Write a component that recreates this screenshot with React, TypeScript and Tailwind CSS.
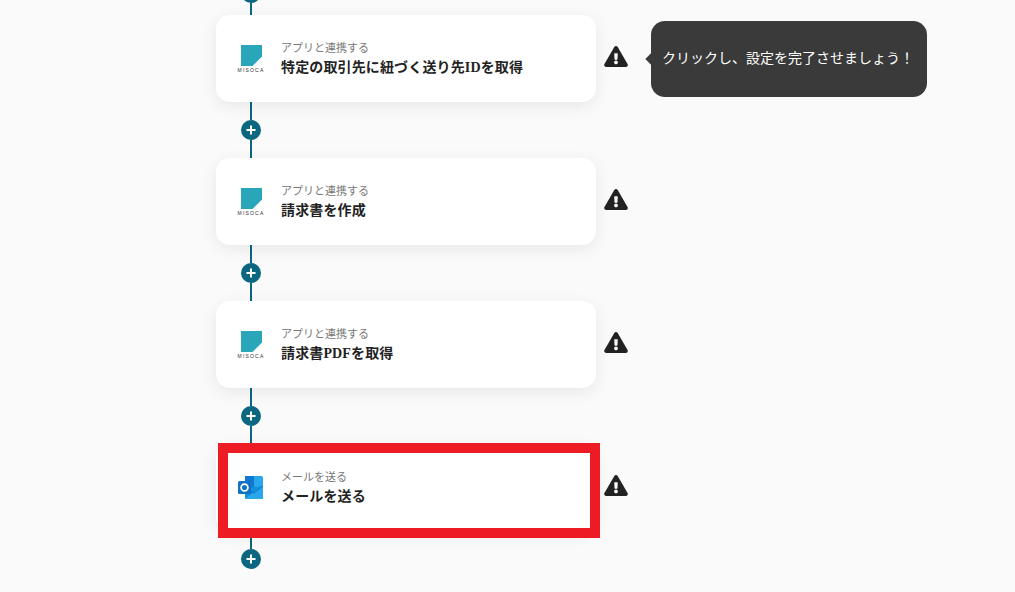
import { FaExclamationTriangle } from "react-icons/fa"

const jp = "font-['Noto_Sans_CJK_JP','Noto_Sans',sans-serif]"

function MisocaLogo() {
  return (
    <div className="mt-[2px] flex w-[24px] flex-col items-center">
      <svg width="21" height="21" viewBox="0 0 21 21" className="block">
        <path d="M0 0H21V11.5L11.5 21H0Z" fill="#2aa6ba" />
      </svg>
      <span className="mt-[1px] text-[5px] leading-[7px] tracking-[1.2px] text-[#333] font-['Liberation_Sans',sans-serif]">
        MISOCA
      </span>
    </div>
  )
}

function OutlookLogo() {
  return (
    <svg width="26" height="25" viewBox="0 0 26 25" className="block">
      <rect x="7" y="1" width="9" height="6" fill="#0f78d4" />
      <path d="M16 1H23.5Q25 1 25 2.5V7H16Z" fill="#28a8ea" />
      <rect x="7" y="7" width="9" height="6" fill="#0f78d4" />
      <rect x="16" y="7" width="9" height="6" fill="#28a8ea" />
      <rect x="7" y="13" width="9" height="6" fill="#0a64b8" />
      <path d="M7 13L25 11V22.5Q25 24 23.5 24H8.5Q7 24 7 22.5Z" fill="#1490df" />
      <path d="M7 24L25 11V22.5Q25 24 23.5 24Z" fill="#28a8ea" />
      <path d="M7 13L16 18L25 11" fill="none" stroke="#0c6cc4" strokeWidth="0.8" />
      <rect x="0" y="6" width="13" height="13" rx="1.5" fill="#1272c4" />
      <circle cx="6.5" cy="12.5" r="3.4" fill="none" stroke="#fff" strokeWidth="1.7" />
    </svg>
  )
}

function PlusDot() {
  return (
    <div className="flex h-5 w-5 items-center justify-center rounded-full bg-[#0b6680]">
      <svg width="10" height="10" viewBox="0 0 10 10">
        <path d="M5 1.2V8.8M1.2 5H8.8" stroke="#fff" strokeWidth="2" strokeLinecap="round" />
      </svg>
    </div>
  )
}

function Connector({ last }: { last?: boolean }) {
  return (
    <div className="ml-[25px] flex w-5 flex-col items-center">
      <div className="h-[18px] w-[2px] bg-[#0b6680]" />
      <PlusDot />
      {!last && <div className="h-[18px] w-[2px] bg-[#0b6680]" />}
    </div>
  )
}

function StepRow({
  logo,
  label,
  title,
  children,
}: {
  logo: React.ReactNode
  label: string
  title: string
  children?: React.ReactNode
}) {
  return (
    <div className="relative flex items-center">
      <div className="flex h-[87px] w-[380px] items-center rounded-[14px] bg-white shadow-[0_4px_16px_rgba(0,0,0,0.08)]">
        <div className="flex w-[65px] justify-center pl-[5px]">{logo}</div>
        <div className="flex flex-col">
          <span className="text-[11px] leading-[16px] text-[#777]">{label}</span>
          <span className="mt-[3px] font-['Liberation_Serif','Noto_Sans_CJK_JP',serif] text-sm font-bold leading-[20px] tracking-[0.14px] text-[#222]">
            {title}
          </span>
        </div>
      </div>
      <FaExclamationTriangle className="ml-2 -mt-[5px] h-[21px] w-6 text-[#222]" />
      {children}
    </div>
  )
}

export default function App() {
  return (
    <div className={`h-[592px] overflow-hidden bg-[#fafafa] pl-[216px] ${jp}`}>
      <div className="w-fit -mt-[17px]">
        {/* top of the flow is cut off by the viewport */}
        <div className="ml-[25px] flex w-5 flex-col items-center">
          <PlusDot />
          <div className="h-[12px] w-[2px] bg-[#0b6680]" />
        </div>
        <StepRow logo={<MisocaLogo />} label="アプリと連携する" title="特定の取引先に紐づく送り先IDを取得">
          <div className="absolute left-[435px] top-[6px] flex h-[76px] w-[276px] items-center rounded-[14px] bg-[#3a3a3a] pb-[4px] pl-[11px] text-sm text-white">
            <div className="absolute -left-[4px] top-[34px] h-2 w-2 rotate-45 bg-[#3a3a3a]" />
            クリックし、設定を完了させましょう！
          </div>
        </StepRow>
        <Connector />
        <StepRow logo={<MisocaLogo />} label="アプリと連携する" title="請求書を作成" />
        <Connector />
        <StepRow logo={<MisocaLogo />} label="アプリと連携する" title="請求書PDFを取得" />
        <Connector />
        <StepRow logo={<OutlookLogo />} label="メールを送る" title="メールを送る">
          <div className="absolute -top-px left-[2px] h-[95px] w-[382px] border-[10px] border-[#ed1c24]" />
        </StepRow>
        <Connector last />
      </div>
    </div>
  )
}
